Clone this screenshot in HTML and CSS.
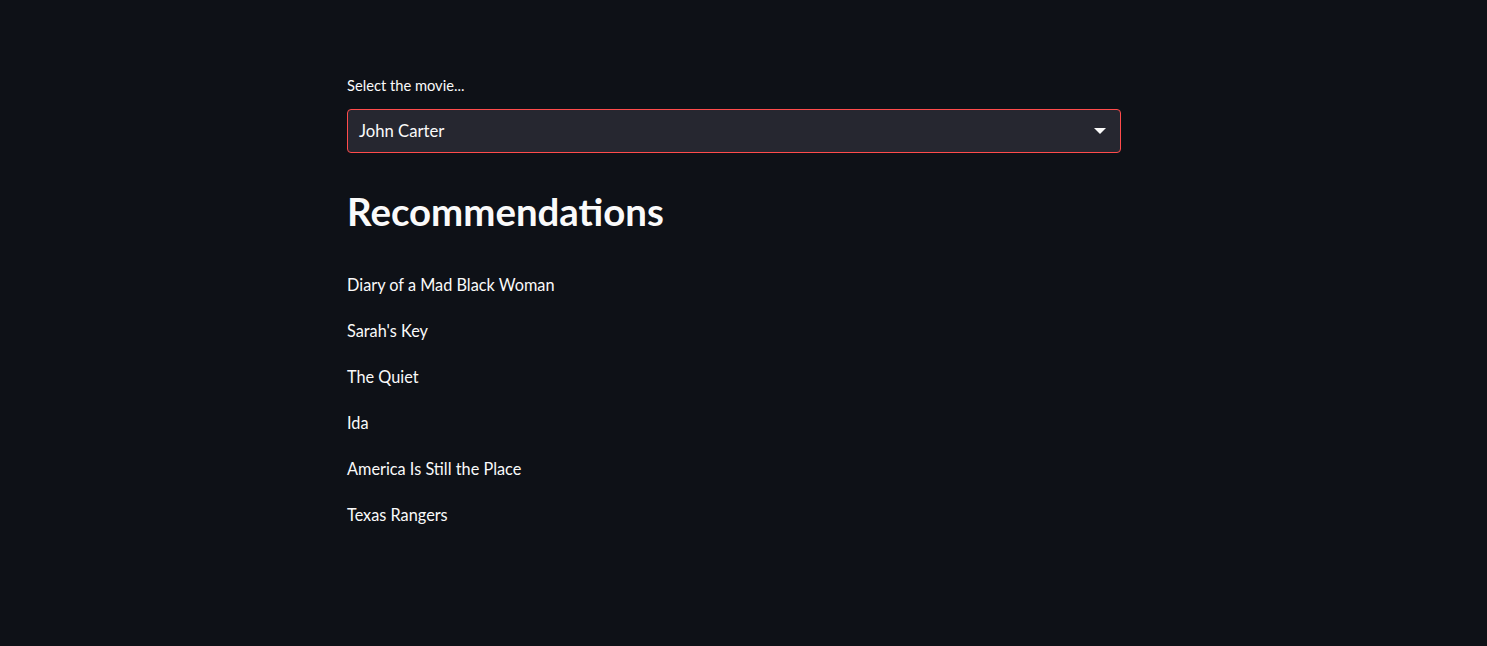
FILE: index.html
```html
<!DOCTYPE html>
<html>
<head>
<meta charset="utf-8">
<link rel="stylesheet" href="styles.css">
</head>
<body>
<main class="main">
  <div class="field">
    <label class="label">Select the movie...</label>
    <div class="select">
      <span class="select-value">John Carter</span>
      <svg class="caret" width="12" height="6" viewBox="0 0 12 6"><path d="M0 0 H12 L6 6 Z" fill="#fafafa"/></svg>
    </div>
  </div>
  <h2 class="heading">Recommendations</h2>
  <div class="list">
    <p class="item">Diary of a Mad Black Woman</p>
    <p class="item">Sarah's Key</p>
    <p class="item">The Quiet</p>
    <p class="item">Ida</p>
    <p class="item">America Is Still the Place</p>
    <p class="item">Texas Rangers</p>
  </div>
</main>
</body>
</html>
```

FILE: styles.css
```css
html, body {
  margin: 0;
  padding: 0;
  background: #0e1117;
  color: #fafafa;
  font-family: Lato, "Noto Sans", sans-serif;
}
.main {
  width: 774px;
  padding: 75px 0 0 347px;
  box-sizing: content-box;
}
.field {
  display: flex;
  flex-direction: column;
}
.label {
  font-size: 14.7px;
  line-height: 20px;
  margin-bottom: 14px;
}
.select {
  height: 44px;
  box-sizing: border-box;
  border: 1px solid #ff4b4b;
  border-radius: 4px;
  background: #262730;
  display: flex;
  align-items: center;
  justify-content: space-between;
  padding: 0 14px 0 11px;
  font-size: 16.7px;
}
.caret {
  display: block;
}
.heading {
  font-size: 38.4px;
  font-weight: 700;
  line-height: 48px;
  margin: 34px 0 0 0;
}
.list {
  margin-top: 38px;
  display: flex;
  flex-direction: column;
  gap: 22px;
}
.item {
  margin: 0;
  font-size: 16.3px;
  line-height: 24px;
}
```
